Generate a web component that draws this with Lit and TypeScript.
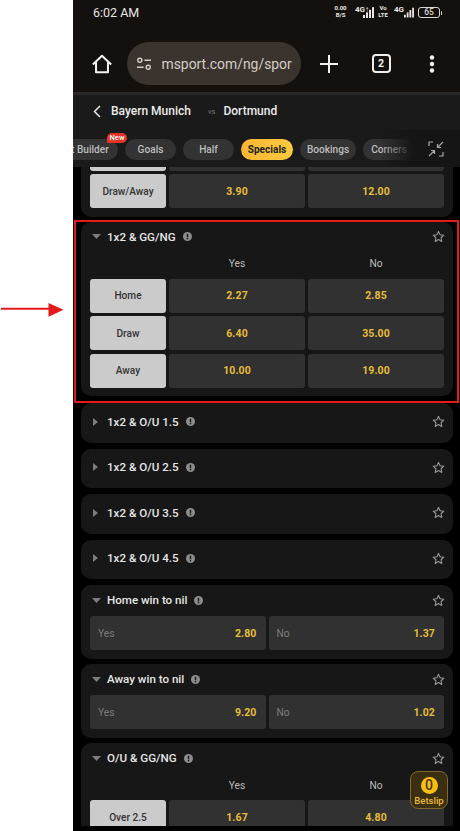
import { LitElement, html, css, svg } from "lit";
import { customElement } from "lit/decorators.js";

const tabs = [
  { t: "Bet Builder", w: 68, badge: true },
  { t: "Goals", w: 51 },
  { t: "Half", w: 51 },
  { t: "Specials", w: 52, on: true },
  { t: "Bookings", w: 56 },
  { t: "Corners", w: 52 },
];

const star = html`<svg class="star" width="13" height="13" viewBox="0 0 24 24" fill="none" stroke="#9a9a9a" stroke-width="2" stroke-linejoin="round"><path d="M12 2.500l2.900 6.300 6.900.8-5.100 4.700 1.400 6.800L12 17.700l-6.100 3.400 1.400-6.800-5.100-4.700 6.900-.8z"/></svg>`;
const info = html`<svg class="info" width="9" height="9" viewBox="0 0 10 10"><circle cx="5" cy="5" r="5" fill="#8c8c8c"/><rect x="4.200" y="2" width="1.600" height="3.800" fill="#1a1a1a"/><rect x="4.200" y="6.600" width="1.600" height="1.500" fill="#1a1a1a"/></svg>`;
const down = html`<svg class="caret" width="9" height="5" viewBox="0 0 9 5"><path d="M0 0h9L4.500 5z" fill="#7d7d7d"/></svg>`;
const right = html`<svg class="caret r" width="5" height="8" viewBox="0 0 5 8"><path d="M0 0l5 4-5 4z" fill="#7d7d7d"/></svg>`;

const bars = () => svg`<svg class="bars" width="11" height="11" viewBox="0 0 11 11">
  ${[0, 1, 2, 3].map((i) => svg`<rect x="${i * 3}" y="${8 - i * 2.6}" width="2" height="${3 + i * 2.6}" fill="#e8e6e4"/>`)}
</svg>`;

@customElement("app-root")
export class AppRoot extends LitElement {
  static styles = css`
    :host { display: block; width: 460px; height: 831px; background: #fff; padding-left: 73px; box-sizing: border-box; position: relative; overflow: hidden; font-family: Roboto, "Liberation Sans", sans-serif; }
    .phone { width: 387px; height: 831px; background: #000; display: flex; flex-direction: column; padding-bottom: 5px; box-sizing: border-box; position: relative; }
    .chrome { background: #14100d; flex: none; }
    .status { height: 42px; display: flex; align-items: flex-start; justify-content: space-between; box-sizing: border-box; padding: 5px 20px 0 20px; color: #e8e6e4; }
    .time { font-size: 12.5px; line-height: 16px; }
    .sicons { display: flex; align-items: flex-start; }
    .stack { display: flex; flex-direction: column; align-items: center; width: 13px; font-size: 6px; line-height: 7.1px; font-weight: 700; color: #e8e6e4; margin-top: -1px; }
    .stack.vo { width: 10px; margin: -1px 6px 0 3px; }
    .net { display: flex; align-items: flex-end; height: 13px; font-size: 8px; font-weight: 700; color: #e8e6e4; }
    .net span { align-self: flex-start; line-height: 9px; }
    .net.a { width: 20px; margin-left: 8px; }
    .net.b { width: 20px; margin-right: 4px; }
    .net.a .bars { margin-left: -6px; }
    .batt { width: 22px; height: 11px; margin-top: 2px; border: 1px solid #d8d6d4; border-radius: 3px; box-sizing: border-box; font-size: 8.5px; line-height: 9px; text-align: center; color: #d8d6d4; font-weight: 500; position: relative; }
    .batt::after { content: ""; position: absolute; right: -3px; top: 2.5px; width: 1.5px; height: 4px; background: #d8d6d4; border-radius: 1px; }
    .toolbar { height: 50px; display: flex; align-items: flex-start; }
    .tb { height: 43px; display: flex; align-items: center; justify-content: center; flex: none; }
    .home { width: 54px; padding-left: 4px; box-sizing: border-box; }
    .pill { width: 174px; background: #3b342e; border-radius: 22px; justify-content: flex-start; gap: 9.5px; padding-left: 9px; box-sizing: border-box; color: #d4cdc6; font-size: 13.9px; overflow: hidden; white-space: nowrap; }
    .plus { width: 56px; }
    .tabc { width: 48px; }
    .tabc span { width: 19px; height: 19px; border: 2px solid #f1efed; border-radius: 4px; box-sizing: border-box; display: flex; align-items: center; justify-content: center; font-size: 10.5px; font-weight: 700; color: #f1efed; }
    .menu { width: 54px; }
    .sep { height: 3px; background: #2a2827; flex: none; }
    .match { height: 35px; background: #1a1a1a; display: flex; align-items: center; flex: none; color: #ececec; font-size: 12px; font-weight: 500; padding: 0 0 3px 20px; box-sizing: border-box; }
    .match svg { margin-right: 10px; }
    .vs { font-size: 7.5px; font-weight: 400; color: #777; margin: 0 8px 0 17px; }
    .tabsbar { height: 37px; background: #1a1a1a; flex: none; position: relative; overflow: hidden; }
    .tabs { display: flex; gap: 7px; margin-left: -23px; padding-top: 8.5px; }
    .tab { height: 21px; flex: none; border-radius: 11px; background: #333; color: #bdbdbd; font-size: 10.1px; font-weight: 500; display: flex; align-items: center; justify-content: center; position: relative; box-sizing: border-box; }
    .tab.on { background: linear-gradient(90deg, #f7b733, #fdc93f); color: #222; font-weight: 700; }
    .new { position: absolute; left: 57px; top: -6px; width: 20px; height: 10px; border-radius: 5px 5px 5px 1px; background: #e53528; color: #fff; font-size: 7.5px; line-height: 10px; text-align: center; font-weight: 500; }
    .collapse { position: absolute; right: 0; top: 0; bottom: 0; width: 80px; background: linear-gradient(90deg, rgba(21,21,21,0) 0, #151515 34px); display: flex; align-items: center; justify-content: flex-end; padding-right: 16px; box-sizing: border-box; }
    .scroll { flex: 1; min-height: 0; overflow: hidden; padding: 0 7px 0 8px; }
    .list { display: flex; flex-direction: column; gap: 6px; margin-top: -30px; }
    .card { background: #171717; border-radius: 10px; padding: 0 9px; box-sizing: border-box; }
    .card.first { padding-bottom: 8.7px; border-radius: 0 0 10px 10px; margin-bottom: -1px; }
    .card.main { padding-bottom: 8px; margin-bottom: 1.5px; }
    .head { height: 31px; flex: none; display: flex; align-items: center; color: #e6e6e6; font-size: 11.6px; font-weight: 500; padding-bottom: 1px; box-sizing: border-box; }
    .caret { margin-right: 6px; margin-left: 2px; flex: none; }
    .caret.r { margin: 0 9px 0 3px; }
    .info { margin-left: 7px; }
    .star { margin-left: auto; margin-right: -1px; }
    .card.closed { height: 39.5px; display: flex; align-items: center; padding-bottom: 2px; }
    .card.closed .head { flex: 1; height: auto; padding-bottom: 0; }
    .grid { display: grid; grid-template-columns: 76px 136px 136px; gap: 3.3px 3px; }
    .ch { height: 26px; display: flex; align-items: center; justify-content: center; font-size: 10.2px; color: #bcbcbc; margin-bottom: -3.3px; padding-bottom: 4px; box-sizing: border-box; }
    .lab { height: 34px; background: #cbcbcb; border-radius: 3px; color: #333; font-size: 10.1px; font-weight: 500; display: flex; align-items: center; justify-content: center; }
    .odd { height: 34px; background: #313131; border-radius: 3px; color: #e8bd38; font-size: 10.5px; font-weight: 700; letter-spacing: .1px; display: flex; align-items: center; justify-content: center; }
    .two { display: grid; grid-template-columns: 1fr 1fr; gap: 3px; padding-bottom: 9px; }
    .card.wn { margin-bottom: -1px; }
    .opt { height: 34px; background: #313131; border-radius: 3px; display: flex; align-items: center; justify-content: space-between; padding: 0 9px 0 8px; font-size: 10.2px; color: #7c7c7c; }
    .opt b { color: #e8bd38; font-size: 10.5px; font-weight: 700; letter-spacing: .1px; }
    .betslip { position: absolute; left: 337px; top: 771px; width: 38px; height: 38px; box-sizing: border-box; border: 1px solid #80692a; border-radius: 8px; background: #3a3011; display: flex; flex-direction: column; align-items: center; padding-top: 5px; color: #eabc35; font-size: 9.5px; font-weight: 500; line-height: 11px; }
    .betslip i { width: 17px; height: 17px; border-radius: 50%; background: #fbbe14; color: #4a3a08; font-style: normal; font-size: 14px; line-height: 17px; text-align: center; margin-bottom: 1px; }
    .redbox { position: absolute; left: 1px; top: 220px; width: 385px; height: 183px; border: 2.8px solid #e31b1b; box-sizing: border-box; pointer-events: none; }
    .arrow { position: absolute; left: 0; top: 302px; }
  `;

  private rows(rows: string[][]) {
    return rows.map(
      (r) => html`<div class="lab">${r[0]}</div><div class="odd">${r[1]}</div><div class="odd">${r[2]}</div>`
    );
  }

  private closed(t: string) {
    return html`<div class="card closed"><div class="head">${right}<span>${t}</span>${info}${star}</div></div>`;
  }

  private wn(t: string, a: string, b: string) {
    return html`<div class="card wn">
      <div class="head">${down}<span>${t}</span>${info}${star}</div>
      <div class="two">
        <div class="opt"><span>Yes</span><b>${a}</b></div>
        <div class="opt"><span>No</span><b>${b}</b></div>
      </div>
    </div>`;
  }

  render() {
    return html`
      <svg class="arrow" width="66" height="16" viewBox="0 0 66 16"><path d="M1 6.800h48" stroke="#e31b1b" stroke-width="2"/><path d="M48.500 1l15 6.800-15 7z" fill="#e31b1b"/></svg>
      <div class="phone">
        <div class="chrome">
          <div class="status">
            <span class="time">6:02 AM</span>
            <div class="sicons">
              <div class="stack"><span>0.00</span><span>B/S</span></div>
              <div class="net a"><span>4G↑</span>${bars()}</div>
              <div class="stack vo"><span>Vo</span><span>LTE</span></div>
              <div class="net b"><span>4G</span>${bars()}</div>
              <div class="batt">65</div>
            </div>
          </div>
          <div class="toolbar">
            <div class="tb home"><svg width="22" height="22" viewBox="0 0 24 24" fill="none" stroke="#f4f2f0" stroke-width="2.200" stroke-linejoin="round"><path d="M2 12.500L12 3l10 9.500M5.500 10v11h13V10"/></svg></div>
            <div class="tb pill">
              <svg width="16" height="14" viewBox="0 0 17 15" fill="none" stroke="#d4cdc6" stroke-width="1.500"><circle cx="4" cy="3.500" r="2.200"/><path d="M9 3.500h7M1 11h7"/><circle cx="13" cy="11" r="2.200"/></svg>
              <span>msport.com/ng/spor</span>
            </div>
            <div class="tb plus"><svg width="18" height="18" viewBox="0 0 18 18" stroke="#f4f2f0" stroke-width="2"><path d="M9 0v18M0 9h18"/></svg></div>
            <div class="tb tabc"><span>2</span></div>
            <div class="tb menu"><svg width="6" height="18" viewBox="0 0 6 18" fill="#f4f2f0"><circle cx="3" cy="2.500" r="2.200"/><circle cx="3" cy="9" r="2.200"/><circle cx="3" cy="15.500" r="2.200"/></svg></div>
          </div>
        </div>
        <div class="sep"></div>
        <div class="match">
          <svg width="8" height="13" viewBox="0 0 8 13" fill="none" stroke="#e8e8e8" stroke-width="1.500"><path d="M7 1L1.500 6.500 7 12"/></svg>
          <span>Bayern Munich</span><span class="vs">vs</span><span>Dortmund</span>
        </div>
        <div class="tabsbar">
          <div class="tabs">
            ${tabs.map(
              (t) => html`<div class="tab ${t.on ? "on" : ""}" style="width:${t.w}px">${t.t}${t.badge ? html`<span class="new">New</span>` : ""}</div>`
            )}
          </div>
          <div class="collapse">
            <svg width="16" height="16" viewBox="0 0 16 16" fill="none" stroke="#a8a8a8" stroke-width="1.200"><path d="M1 5V1h4M15 11v4h-4M15 1L9.500 6.500M9.500 3v3.500H13M1 15l5.500-5.500M3 9.500h3.500V13"/></svg>
          </div>
        </div>
        <div class="scroll">
          <div class="list">
            <div class="card first">
              <div class="grid">
                ${this.rows([["", "", ""]])}
                ${this.rows([["Draw/Away", "3.90", "12.00"]])}
              </div>
            </div>
            <div class="card main">
              <div class="head">${down}<span>1x2 &amp; GG/NG</span>${info}${star}</div>
              <div class="grid">
                <div class="ch"></div><div class="ch">Yes</div><div class="ch">No</div>
                ${this.rows([["Home", "2.27", "2.85"], ["Draw", "6.40", "35.00"], ["Away", "10.00", "19.00"]])}
              </div>
            </div>
            ${this.closed("1x2 & O/U 1.5")}
            ${this.closed("1x2 & O/U 2.5")}
            ${this.closed("1x2 & O/U 3.5")}
            ${this.closed("1x2 & O/U 4.5")}
            ${this.wn("Home win to nil", "2.80", "1.37")}
            ${this.wn("Away win to nil", "9.20", "1.02")}
            <div class="card">
              <div class="head">${down}<span>O/U &amp; GG/NG</span>${info}${star}</div>
              <div class="grid">
                <div class="ch"></div><div class="ch">Yes</div><div class="ch">No</div>
                ${this.rows([["Over 2.5", "1.67", "4.80"]])}
              </div>
            </div>
          </div>
        </div>
        <div class="redbox"></div>
        <div class="betslip"><i>0</i><span>Betslip</span></div>
      </div>
    `;
  }
}
